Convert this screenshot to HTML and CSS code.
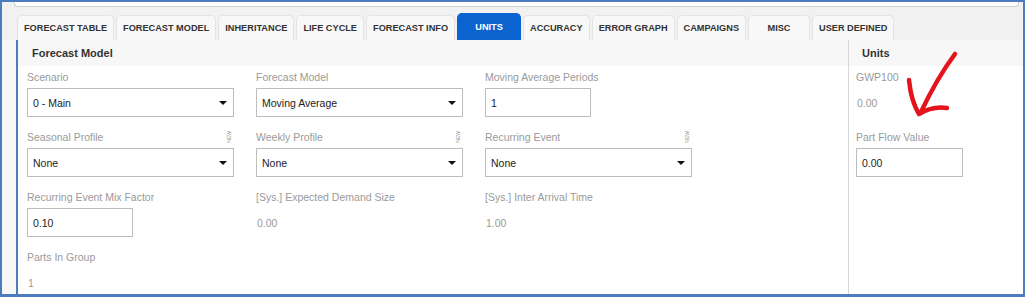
FILE: index.html
```html
<!DOCTYPE html>
<html lang="en">
<head>
    <meta charset="UTF-8">
    <title>Forecast Model - Units</title>
    <link rel="stylesheet" href="styles.css">
</head>
<body>
    <div class="frame">
        <div class="top-strip"><div class="top-card"></div></div>

        <nav class="tabs">
            <div class="tab">FORECAST TABLE</div>
            <div class="tab">FORECAST MODEL</div>
            <div class="tab">INHERITANCE</div>
            <div class="tab">LIFE CYCLE</div>
            <div class="tab">FORECAST INFO</div>
            <div class="tab active">UNITS</div>
            <div class="tab">ACCURACY</div>
            <div class="tab">ERROR GRAPH</div>
            <div class="tab">CAMPAIGNS</div>
            <div class="tab">MISC</div>
            <div class="tab">USER DEFINED</div>
        </nav>

        <div class="content">
            <div class="gutter"></div>

            <section class="panel main-panel">
                <div class="panel-head">Forecast Model</div>
                <div class="form-grid">
                    <div class="field">
                        <div class="label">Scenario</div>
                        <div class="select">0 - Main<span class="caret"></span></div>
                    </div>
                    <div class="field">
                        <div class="label">Forecast Model</div>
                        <div class="select">Moving Average<span class="caret"></span></div>
                    </div>
                    <div class="field">
                        <div class="label">Moving Average Periods</div>
                        <div class="input short">1</div>
                    </div>

                    <div class="field">
                        <div class="label">Seasonal Profile<span class="tag">NEW</span></div>
                        <div class="select">None<span class="caret"></span></div>
                    </div>
                    <div class="field">
                        <div class="label">Weekly Profile<span class="tag">NEW</span></div>
                        <div class="select">None<span class="caret"></span></div>
                    </div>
                    <div class="field">
                        <div class="label">Recurring Event<span class="tag">NEW</span></div>
                        <div class="select">None<span class="caret"></span></div>
                    </div>

                    <div class="field">
                        <div class="label">Recurring Event Mix Factor</div>
                        <div class="input short">0.10</div>
                    </div>
                    <div class="field">
                        <div class="label">[Sys.] Expected Demand Size</div>
                        <div class="value">0.00</div>
                    </div>
                    <div class="field">
                        <div class="label">[Sys.] Inter Arrival Time</div>
                        <div class="value">1.00</div>
                    </div>

                    <div class="field">
                        <div class="label">Parts In Group</div>
                        <div class="value">1</div>
                    </div>
                </div>
            </section>

            <section class="panel units-panel">
                <div class="panel-head">Units</div>
                <div class="form-stack">
                    <div class="field">
                        <div class="label">GWP100</div>
                        <div class="value">0.00</div>
                    </div>
                    <div class="field">
                        <div class="label">Part Flow Value</div>
                        <div class="input short wide">0.00</div>
                    </div>
                </div>
            </section>
        </div>

        <!-- hand-drawn annotation on top of the screenshot -->
        <svg class="annotation" width="60" height="80" viewBox="900 48 60 80">
            <path d="M955 54 Q 937 78 921 112" />
            <path d="M909 80 Q 911 101 919 114 Q 932 106 947 108" />
        </svg>
    </div>
</body>
</html>
```

FILE: styles.css
```css
body {
    margin: 0;
    padding: 0;
    background-color: #fff;
    font-family: "Liberation Sans", Arial, sans-serif;
    color: #222;
}
.frame {
    position: relative;
    width: 1025px;
    height: 297px;
    box-sizing: border-box;
    border: 2px solid #4c7cbd;
    border-bottom-width: 3px;
    display: flex;
    flex-direction: column;
    overflow: hidden;
}
.top-strip {
    flex-shrink: 0;
    height: 11px;
    background-color: #f1f1f1;
}
.top-card {
    height: 4px;
    margin: 0 4px 0 12px;
    background-color: #fff;
    border: 1px solid #cfcfcf;
    border-top: none;
    border-radius: 0 0 4px 4px;
}
.tabs {
    flex-shrink: 0;
    height: 27px;
    display: flex;
    align-items: flex-end;
    gap: 2px;
    padding-left: 15px;
    background-color: #f1f1f1;
}
.tab {
    height: 25px;
    min-width: 62px;
    box-sizing: border-box;
    padding: 0 6px;
    display: flex;
    align-items: center;
    justify-content: center;
    background-color: #f8f8f8;
    border: 1px solid #e4e4e4;
    border-bottom: none;
    border-radius: 5px 5px 0 0;
    font-size: 9.2px;
    font-weight: bold;
    color: #333;
    white-space: nowrap;
}
.tab.active {
    height: 27px;
    min-width: 64px;
    background-color: #0a63cf;
    border-color: #0a63cf;
    color: #fff;
}
.content {
    flex: 1;
    min-height: 0;
    display: flex;
    overflow: hidden;
    background-color: #fff;
}
.gutter {
    width: 14px;
    background-color: #f7f7f7;
}
.main-panel {
    width: 830px;
    border-left: 2px solid #4c7cbd;
    border-right: 1px solid #d8d8d8;
}
.units-panel {
    flex: 1;
}
.panel-head {
    height: 26px;
    line-height: 26px;
    padding-left: 14px;
    background-color: #f7f7f7;
    font-size: 11px;
    font-weight: bold;
    color: #333;
}
.units-panel .panel-head {
    padding-left: 13px;
}
.form-grid {
    display: grid;
    grid-template-columns: 207px 207px 207px;
    column-gap: 22px;
    row-gap: 13px;
    padding: 4px 0 0 9px;
}
.form-stack {
    display: flex;
    flex-direction: column;
    gap: 13px;
    padding: 4px 0 0 7px;
}
.label {
    height: 14px;
    line-height: 14px;
    margin-bottom: 4px;
    font-size: 10.5px;
    color: #9a9a9a;
    display: flex;
    justify-content: space-between;
    align-items: center;
    white-space: nowrap;
}
.tag {
    writing-mode: vertical-rl;
    transform: rotate(180deg);
    font-size: 5px;
    line-height: 5px;
    color: #8a8a8a;
    margin-right: 2px;
}
.select,
.input {
    height: 29px;
    box-sizing: border-box;
    border: 1px solid #bdbdbd;
    background-color: #fff;
    padding: 0 5px;
    display: flex;
    align-items: center;
    justify-content: space-between;
    font-size: 10.5px;
    color: #222;
}
.input.short {
    width: 106px;
}
.input.wide {
    width: 107px;
}
.caret {
    width: 0;
    height: 0;
    border-left: 4px solid transparent;
    border-right: 4px solid transparent;
    border-top: 4px solid #111;
    margin-right: 1px;
}
.value {
    height: 29px;
    display: flex;
    align-items: center;
    padding-left: 1px;
    font-size: 10.5px;
    color: #9a9a9a;
}
.annotation {
    position: absolute;
    left: 898px;
    top: 46px;
    fill: none;
    stroke: #e3141b;
    stroke-width: 4.5;
    stroke-linecap: round;
    stroke-linejoin: round;
    pointer-events: none;
}
```
